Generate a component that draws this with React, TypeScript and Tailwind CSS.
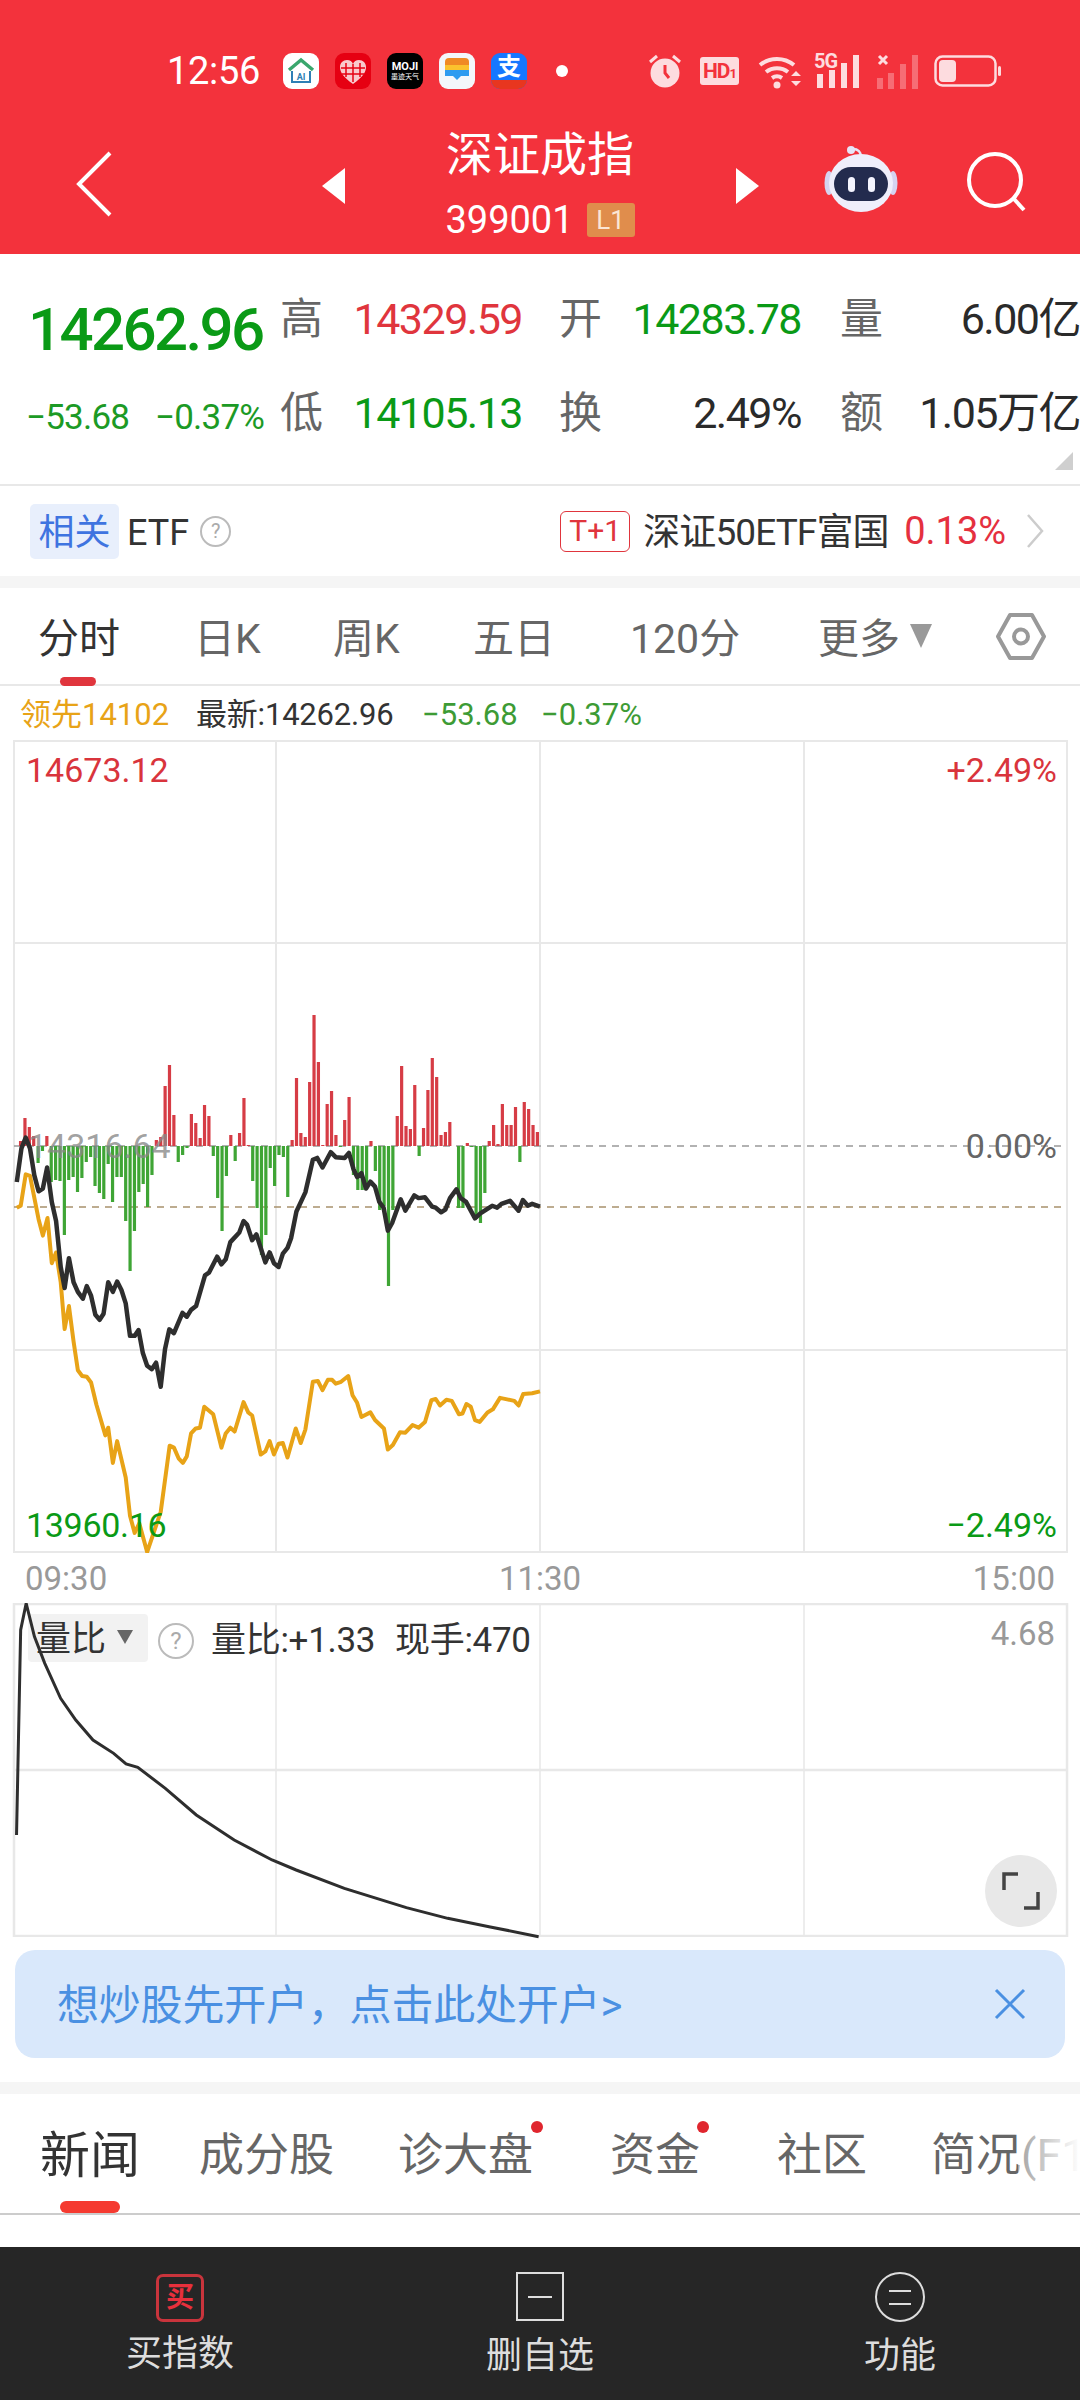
const bars = [0, 5, 28, 19, 10, -17, -5, 10, -36, -34, -35, -89, -34, -31, -46, -32, -16, -11, -40, -47, -53, -18, -56, -31, -31, -75, -125, -85, -46, -38, -61, -29, 6, 9, 60, 81, 31, -16, -9, -2, 32, 23, 8, 41, 30, -10, -52, -85, -30, 11, -15, 13, 48, 1, -35, -62, -109, -89, -22, -40, -9, -11, -51, 6, 68, 13, 9, 64, 131, 84, 1, 42, 55, 11, -1, 26, 49, -29, -44, -44, -40, 5, -25, -64, -60, -140, -64, 30, 80, 20, 17, 61, -10, 18, 56, 88, 69, 11, 14, 24, 0, -62, -62, 3, -1, -73, -77, -47, 5, 21, 2, 42, 21, 21, 39, -16, 44, 37, 21, 14];

const blackLine = '47,528 60,440 72,412 84,440 96,510 108,552 120,545 132,490 145,580 157,630 170,750 181,805 193,727 206,790 218,815 232,833 243,800 255,825 267,875 279,888 290,872 303,790 316,815 328,788 340,810 352,845 364,930 377,930 388,915 400,975 412,1008 425,1017 437,1000 450,1063 462,965 474,913 487,923 511,870 523,880 535,862 549,852 574,772 585,765 608,723 620,743 632,730 645,685 670,660 682,630 692,640 706,680 718,665 743,738 755,712 767,740 780,750 792,715 805,700 815,675 830,605 855,555 876,470 888,465 903,490 926,450 940,463 965,465 977,452 990,495 1000,515 1012,505 1025,545 1037,527 1050,540 1062,580 1074,595 1086,655 1098,635 1122,573 1135,603 1160,563 1172,570 1190,568 1210,592 1220,595 1235,607 1247,600 1260,570 1278,547 1290,570 1305,580 1330,623 1345,610 1378,590 1392,595 1404,585 1428,577 1452,603 1464,575 1478,590 1490,585 1512,592';

const orangeLine = '47,595 58,590 72,508 84,512 108,625 120,668 133,622 145,740 157,712 170,790 181,912 193,852 206,945 218,1020 230,1035 243,1037 255,1052 270,1110 295,1190 303,1170 316,1262 328,1205 352,1300 364,1400 377,1445 390,1420 412,1495 450,1390 475,1217 487,1222 500,1250 512,1262 523,1245 535,1185 548,1172 560,1170 572,1115 597,1135 620,1222 632,1185 645,1170 657,1180 682,1103 695,1130 706,1138 730,1240 743,1232 755,1205 767,1240 780,1212 792,1210 805,1248 828,1172 842,1210 855,1175 876,1050 890,1048 903,1072 918,1045 930,1045 940,1055 955,1050 975,1035 987,1085 1000,1105 1012,1142 1037,1130 1050,1150 1075,1172 1086,1227 1100,1215 1120,1182 1135,1183 1155,1163 1172,1170 1190,1155 1208,1098 1220,1095 1232,1112 1250,1097 1265,1100 1285,1135 1295,1133 1306,1108 1318,1115 1330,1150 1343,1155 1365,1130 1380,1122 1400,1092 1420,1096 1440,1100 1452,1112 1465,1082 1490,1080 1512,1075';

const ratioLine = '24,885 30,270 38,190 50,290 65,370 88,475 110,540 135,600 165,640 183,672 200,682 240,745 285,825 340,900 395,960 430,990 500,1045 590,1103 650,1135 710,1160 782,1190';

function StatusIcons() {
  return (
    <div className="flex h-full items-center">
      {/* alarm */}
      <svg width="34" height="34" viewBox="0 0 34 34" className="ml-[80px] shrink-0">
        <circle cx="17" cy="19" r="14.5" fill="#fddcdf" />
        <path d="M17 11v8l4 5" stroke="#f3323c" strokeWidth="3" fill="none" />
        <path d="M2 8l7-6M32 8l-7-6" stroke="#fddcdf" strokeWidth="3" />
      </svg>
      <div className="ml-[18px] flex h-[28px] w-[39px] shrink-0 items-center justify-center rounded-[3px] bg-[#fddcdf] text-[21px] font-bold leading-none tracking-[-1px] text-[#f3323c]">
        HD<span className="mt-[5px] text-[13px]">1</span>
      </div>
      {/* wifi */}
      <svg width="46" height="36" viewBox="0 0 46 36" className="ml-[18px] shrink-0">
        <path d="M3 12a27 27 0 0 1 34 0M9 19a18 18 0 0 1 22 0M15 25a9 9 0 0 1 10 0" stroke="#fddcdf" strokeWidth="4" fill="none" />
        <circle cx="20" cy="32" r="3.5" fill="#fddcdf" />
        <path d="M34 23l5-5 5 5zM34 28l5 5 5-5z" fill="#fddcdf" />
      </svg>
      <div className="relative ml-[11px] h-[34px] w-[47px] shrink-0">
        <span className="absolute left-0 top-[-3px] text-[20px] font-bold leading-none tracking-[-1px] text-[#fddcdf]">5G</span>
        <svg width="47" height="34" viewBox="0 0 47 34" className="absolute inset-0">
          <path d="M3 20h6v14H3zM15 16h6v18h-6zM27 9h6v25h-6zM39 1h6v33h-6z" fill="#fddcdf" />
        </svg>
      </div>
      <svg width="43" height="36" viewBox="0 0 43 36" className="ml-[15px] shrink-0">
        <path d="M1 25h6v11H1zM12 20h6v16h-6zM24 11h6v25h-6zM36 2h6v34h-6z" fill="#fddcdf" fillOpacity="0.35" />
        <path d="M3 3l8 8M11 3l-8 8" stroke="#fddcdf" strokeWidth="3" />
      </svg>
      <svg width="68" height="32" viewBox="0 0 68 32" className="ml-[15px] shrink-0">
        <rect x="1.5" y="1.5" width="60" height="29" rx="7" stroke="#fddcdf" strokeWidth="2.5" fill="none" />
        <rect x="5" y="5" width="17" height="22" rx="4" fill="#fddcdf" />
        <rect x="64" y="11" width="3" height="10" rx="1.5" fill="#fddcdf" />
      </svg>
    </div>
  );
}

function AppIcons() {
  return (
    <div className="ml-[23px] flex shrink-0 items-center gap-[16px]">
      <div className="h-[36px] w-[36px] overflow-hidden rounded-[9px] bg-white">
        <svg width="36" height="36" viewBox="0 0 36 36">
          <path d="M6 17L18 7l12 10" stroke="#3aa76d" strokeWidth="3.5" fill="none" />
          <path d="M9 18v11h18V18" stroke="#2f7fb5" strokeWidth="2" fill="none" />
          <text x="18" y="27" textAnchor="middle" fontSize="9" fontWeight="700" fill="#2f7fb5">AI</text>
        </svg>
      </div>
      <div className="h-[36px] w-[36px] overflow-hidden rounded-[9px] bg-[#e60012]">
        <svg width="36" height="36" viewBox="0 0 36 36">
          <path d="M18 31C8 24 5 19 5 14c0-4 3-7 7-7 3 0 5 1.500 6 4 1-2.500 3-4 6-4 4 0 7 3 7 7 0 5-3 10-13 17z" fill="#f9c9cc" />
          <path d="M11 10v14M18 11v18M25 10v14M6 15h24M7 21h22" stroke="#e60012" strokeWidth="1.500" />
        </svg>
      </div>
      <div className="flex h-[36px] w-[36px] flex-col items-center justify-center rounded-[9px] bg-black text-white">
        <span className="text-[11px] font-bold leading-none">MOJI</span>
        <span className="mt-[2px] text-[7px] leading-none">墨迹天气</span>
      </div>
      <div className="h-[36px] w-[36px] overflow-hidden rounded-[9px] bg-[#f3f7fb]">
        <svg width="36" height="36" viewBox="0 0 36 36">
          <path d="M6 9a4 4 0 0 1 4-4h16a4 4 0 0 1 4 4v3H6z" fill="#f08a24" />
          <rect x="6" y="12" width="24" height="5" fill="#fbc22d" />
          <path d="M6 17h24v6H22l-4 4-4-4H6z" fill="#2d9bf0" />
        </svg>
      </div>
      <div className="relative h-[36px] w-[36px] overflow-hidden rounded-[9px] bg-[#1677ff]">
        <span className="absolute left-0 right-0 top-[2px] text-center text-[24px] font-bold leading-none text-white">支</span>
        <div className="absolute bottom-0 left-0 right-0 h-[9px] bg-[#e8361f]" />
      </div>
      <div className="ml-[13px] h-[12px] w-[12px] rounded-full bg-white" />
    </div>
  );
}

function Header() {
  return (
    <header className="h-[254px] bg-[#f3323c] text-white">
      <div className="flex h-[142px] items-center pl-[167px]">
        <span className="w-[93px] shrink-0 text-[38px] leading-none tracking-[-0.3px]">12:56</span>
        <AppIcons />
        <StatusIcons />
      </div>
      <div className="relative flex h-[112px] items-start">
        <svg width="38" height="66" viewBox="0 0 38 66" className="ml-[75px] mt-[9px] shrink-0">
          <path d="M35 2L4 33l31 31" stroke="#fff" strokeWidth="4" fill="none" />
        </svg>
        <svg width="24" height="36" viewBox="0 0 24 36" className="ml-[209px] mt-[26px] shrink-0">
          <path d="M23 0v36L0 18z" fill="#fff" />
        </svg>
        <div className="ml-[98px] flex w-[192px] shrink-0 flex-col items-center">
          <span className="mt-[-14px] text-[47px] leading-[54px]">深证成指</span>
          <div className="mt-[19px] flex items-center gap-[13px]">
            <span className="text-[38px] leading-[38px]">399001</span>
            <span className="flex h-[34px] w-[48px] items-center justify-center rounded-[3px] bg-[#e08d4c] text-[26px] leading-none text-[#fbe6d5]">L1</span>
          </div>
        </div>
        <svg width="24" height="36" viewBox="0 0 24 36" className="ml-[99px] mt-[26px] shrink-0">
          <path d="M1 0v36l23-18z" fill="#fff" />
        </svg>
        {/* robot */}
        <svg width="74" height="70" viewBox="0 0 74 70" className="ml-[65px] mt-[2px] shrink-0">
          <circle cx="27" cy="6" r="4" fill="#e6e4f7" />
          <path d="M29 5c5 0 8 3 8 8" stroke="#e6e4f7" strokeWidth="2.500" fill="none" />
          <ellipse cx="5" cy="39" rx="4.500" ry="12" fill="#d5d3f0" />
          <ellipse cx="69" cy="39" rx="4.500" ry="12" fill="#d5d3f0" />
          <ellipse cx="37" cy="39" rx="32" ry="29" fill="#efeefb" />
          <rect x="10" y="23" width="54" height="34" rx="17" fill="#232b4e" />
          <rect x="24" y="33" width="7" height="15" rx="3.500" fill="#f4f4ff" />
          <rect x="44" y="33" width="7" height="15" rx="3.500" fill="#f4f4ff" />
        </svg>
        {/* search */}
        <svg width="62" height="62" viewBox="0 0 62 62" className="ml-[67px] mt-[10px] shrink-0">
          <circle cx="30" cy="28" r="26" stroke="#fff" strokeWidth="4" fill="none" />
          <path d="M49 47l10 11" stroke="#fff" strokeWidth="4" fill="none" />
        </svg>
      </div>
    </header>
  );
}

function QuoteCell({ label, value, color, width }: { label: string; value: string; color: string; width: string }) {
  return (
    <div className="flex items-center">
      <span className="ml-[-1px] mr-[1px] w-[41px] whitespace-nowrap text-[43px] leading-none text-[#666]">{label}</span>
      <span className={`${width} text-right text-[43px] leading-none tracking-[-1.5px] ${color}`}>{value}</span>
    </div>
  );
}

function Quote() {
  return (
    <section className="relative flex h-[232px] border-b-2 border-[#e8e8e8] bg-white">
      <div className="w-[281px] shrink-0 pl-[28px]">
        <div className="mt-[45px] text-[60px] font-medium leading-[62px] tracking-[-2.6px] text-[#0a9a16]">14262.96</div>
        <div className="mt-[39px] flex items-center text-[35px] leading-none tracking-[-0.8px] text-[#1c9a25]">
          <span className="ml-[-2px] w-[129px]">−53.68</span>
          <span>−0.37%</span>
        </div>
      </div>
      <div className="flex flex-col gap-[51px] pt-[44px]">
        <div className="flex">
          <QuoteCell label="高" value="14329.59" color="text-[#e0353d]" width="w-[200px]" />
          <div className="ml-[38px]">
            <QuoteCell label="开" value="14283.78" color="text-[#0a9a16]" width="w-[200px]" />
          </div>
          <div className="ml-[40px]">
            <QuoteCell label="量" value="6.00亿" color="text-[#2a2a2a]" width="w-[198px]" />
          </div>
        </div>
        <div className="flex">
          <QuoteCell label="低" value="14105.13" color="text-[#0a9a16]" width="w-[200px]" />
          <div className="ml-[38px]">
            <QuoteCell label="换" value="2.49%" color="text-[#2a2a2a]" width="w-[200px]" />
          </div>
          <div className="ml-[40px]">
            <QuoteCell label="额" value="1.05万亿" color="text-[#2a2a2a]" width="w-[198px]" />
          </div>
        </div>
      </div>
      <svg width="18" height="18" viewBox="0 0 18 18" className="absolute bottom-[14px] right-[7px]">
        <path d="M18 0v18H0z" fill="#cfcfcf" />
      </svg>
    </section>
  );
}

function EtfRow() {
  return (
    <section className="flex h-[90px] items-center bg-white pl-[30px]">
      <span className="flex h-[55px] w-[89px] shrink-0 items-center justify-center rounded-[5px] bg-[#e8effc] pt-[3px] text-[36px] leading-none text-[#3f74e0]">相关</span>
      <span className="ml-[8px] mt-[3px] text-[36px] leading-none text-[#333]">ETF</span>
      <span className="ml-[11px] flex h-[31px] w-[31px] shrink-0 items-center justify-center rounded-full border-2 border-[#bbb] text-[20px] leading-none text-[#aaa]">?</span>
      <span className="ml-[329px] flex h-[41px] w-[70px] shrink-0 items-center justify-center rounded-[6px] border border-[#e0353d] text-[30px] leading-none text-[#e0353d]">T+1</span>
      <span className="ml-[13px] mt-[3px] w-[242px] shrink-0 whitespace-nowrap text-[37px] leading-none tracking-[-0.9px] text-[#333]">深证50ETF富国</span>
      <span className="ml-[19px] mt-[-1px] w-[102px] shrink-0 whitespace-nowrap text-[38px] leading-none text-[#e5303f]">0.13%</span>
      <svg width="18" height="34" viewBox="0 0 18 34" className="ml-[20px] shrink-0">
        <path d="M2 1l14 16L2 33" stroke="#ccc" strokeWidth="2.500" fill="none" />
      </svg>
    </section>
  );
}

function PeriodTabs() {
  return (
    <nav className="relative flex h-[98px] items-center border-b-2 border-[#e8e8e8] bg-white pl-[38px] pt-[6px] text-[41px] leading-none text-[#666]">
      <span className="w-[159px] shrink-0 text-[#333]">分时</span>
      <span className="ml-[-3px] w-[139px] shrink-0">日K</span>
      <span className="w-[140px] shrink-0">周K</span>
      <span className="w-[157px] shrink-0">五日</span>
      <span className="w-[188px] shrink-0">120分</span>
      <span className="shrink-0">更多</span>
      <svg width="22" height="24" viewBox="0 0 22 24" className="ml-[10px] mt-[-6px] shrink-0">
        <path d="M0 0h22L11 24z" fill="#999" />
      </svg>
      <svg width="50" height="47" viewBox="0 0 50 47" className="ml-[64px] mt-[-6px] shrink-0">
        <path d="M14 2h22l12 21.500L36 45H14L2 23.500z" stroke="#999" strokeWidth="4" fill="none" strokeLinejoin="round" />
        <circle cx="25" cy="23.500" r="7" stroke="#999" strokeWidth="4" fill="none" />
      </svg>
      <div className="absolute bottom-[-2px] left-[60px] h-[9px] w-[36px] rounded-full bg-[#e0353d]" />
    </nav>
  );
}

function InfoLine() {
  return (
    <div className="flex h-[54px] items-center pl-[20px] pt-[2px] text-[31px] leading-none">
      <span className="w-[176px] shrink-0 text-[#e8a317]">领先14102</span>
      <span className="w-[226px] shrink-0 tracking-[-0.2px] text-[#333]">最新:14262.96</span>
      <span className="w-[119px] shrink-0 text-[#3d9b35]">−53.68</span>
      <span className="shrink-0 text-[#3d9b35]">−0.37%</span>
    </div>
  );
}

function PriceChart() {
  const h = 813;
  return (
    <div className="relative h-[813px] bg-white">
      <svg width="1080" height={h} viewBox={`0 740 1080 ${h}`} className="absolute inset-0">
        <g stroke="#e8e8e8" strokeWidth="2" fill="none">
          <rect x="14" y="741" width="1053" height="811" />
          <path d="M276 740v813M540 740v813M804 740v813M14 943h1053M14 1350h1053" />
        </g>
        <path d="M14 1146h1053" stroke="#999" strokeWidth="1.500" strokeDasharray="7 6" />
        <path d="M14 1207h1053" stroke="#a8916c" strokeWidth="1.500" strokeDasharray="7 6" />
        {bars.map((v, i) => (
          <rect
            key={i}
            x={14 + 4.38 * (i + 0.5) - 1.6}
            y={v > 0 ? 1146 - v : 1146}
            width="3.200"
            height={Math.abs(v)}
            fill={v > 0 ? '#d63c45' : '#3fa535'}
          />
        ))}
        <g transform="translate(0 980) scale(0.35714 0.38265)" fill="none" strokeLinejoin="round">
          <polyline points={orangeLine} stroke="#e8a317" strokeWidth="4" vectorEffect="non-scaling-stroke" />
          <polyline points={blackLine} stroke="#2e2e2e" strokeWidth="4.500" vectorEffect="non-scaling-stroke" />
        </g>
      </svg>
      <span className="absolute left-[26px] top-[13px] text-[34px] leading-[34px] text-[#d9343c]">14673.12</span>
      <span className="absolute right-[23px] top-[13px] text-[34px] leading-[34px] text-[#d9343c]">+2.49%</span>
      <span className="absolute left-[28px] top-[389px] text-[34px] leading-[34px] text-[#888]/80">14316.64</span>
      <span className="absolute right-[23px] top-[389px] text-[34px] leading-[34px] text-[#666]">0.00%</span>
      <span className="absolute left-[26px] top-[768px] text-[34px] leading-[34px] tracking-[-0.3px] text-[#0a9a16]">13960.16</span>
      <span className="absolute right-[23px] top-[768px] text-[34px] leading-[34px] text-[#0a9a16]">−2.49%</span>
    </div>
  );
}

function TimeAxis() {
  return (
    <div className="flex h-[50px] items-center justify-between px-[25px] text-[33px] leading-none text-[#999]">
      <span>09:30</span>
      <span>11:30</span>
      <span>15:00</span>
    </div>
  );
}

function RatioChart() {
  return (
    <div className="relative h-[334px] bg-white">
      <svg width="1080" height="334" viewBox="0 1603 1080 334" className="absolute inset-0">
        <g stroke="#e8e8e8" strokeWidth="1.500" fill="none">
          <path d="M276 1603v334M540 1603v334M804 1603v334" />
        </g>
        <g stroke="#e8e8e8" strokeWidth="2.500" fill="none">
          <rect x="14" y="1604" width="1053" height="332" />
          <path d="M14 1770h1053" />
        </g>
      </svg>
      <div className="absolute left-[28px] top-[11px] flex h-[48px] w-[120px] items-center rounded-[4px] bg-[#f2f2f2] pl-[8px] pt-[2px]">
        <span className="text-[35px] leading-none text-[#333]">量比</span>
        <svg width="16" height="14" viewBox="0 0 16 14" className="ml-[11px] mt-[-4px]">
          <path d="M0 0h16L8 14z" fill="#666" />
        </svg>
      </div>
      <svg width="1080" height="460" viewBox="0 0 1568 1380" preserveAspectRatio="none" className="absolute left-0 top-[-63px]">
        <polyline points={ratioLine} stroke="#2e2e2e" strokeWidth="3" fill="none" vectorEffect="non-scaling-stroke" />
      </svg>
      <span className="absolute left-[158px] top-[20px] flex h-[36px] w-[36px] items-center justify-center rounded-full border-2 border-[#bbb] text-[24px] leading-none text-[#aaa]">?</span>
      <span className="absolute left-[211px] top-[20px] text-[35px] leading-none tracking-[-0.3px] text-[#333]">量比:+1.33</span>
      <span className="absolute left-[395px] top-[20px] text-[35px] leading-none tracking-[-0.3px] text-[#333]">现手:470</span>
      <span className="absolute right-[25px] top-[14px] text-[33px] leading-none text-[#999]">4.68</span>
      <div className="absolute left-[985px] top-[252px] flex h-[72px] w-[72px] items-center justify-center rounded-full bg-[#e8e8e8]">
        <svg width="38" height="38" viewBox="0 0 38 38">
          <path d="M16 2H2v16M22 36h14V20" stroke="#444" strokeWidth="3.500" fill="none" />
        </svg>
      </div>
    </div>
  );
}

function Banner() {
  return (
    <div className="mx-[15px] mt-[13px] flex h-[108px] items-center rounded-[20px] bg-[#d9e8fb] pl-[42px] pr-[39px]">
      <span className="mt-[3px] text-[42px] leading-none tracking-[-0.2px] text-[#4a90e2]">想炒股先开户，点击此处开户&gt;</span>
      <svg width="32" height="32" viewBox="0 0 32 32" className="ml-auto shrink-0">
        <path d="M2 2l28 28M30 2L2 30" stroke="#4a90e2" strokeWidth="3" fill="none" />
      </svg>
    </div>
  );
}

function NewsTabs() {
  return (
    <nav className="relative h-[121px] overflow-hidden border-b-2 border-[#ccc] bg-white">
      <div className="flex h-[120px] items-center whitespace-nowrap pl-[40px] pt-[3px] text-[45px] leading-none text-[#666]">
        <span className="w-[159px] shrink-0 text-[50px] text-[#333]">新闻</span>
        <span className="w-[199px] shrink-0">成分股</span>
        <span className="relative w-[212px] shrink-0">
          诊大盘
          <span className="absolute left-[133px] top-[-12px] h-[12px] w-[12px] rounded-full bg-[#e0262e]" />
        </span>
        <span className="relative w-[167px] shrink-0">
          资金
          <span className="absolute left-[87px] top-[-12px] h-[12px] w-[12px] rounded-full bg-[#e0262e]" />
        </span>
        <span className="w-[154px] shrink-0">社区</span>
        <span className="shrink-0">简况(F10)</span>
      </div>
      <div className="absolute bottom-0 right-0 top-0 w-[62px] bg-gradient-to-r from-white/40 to-white" />
      <div className="absolute bottom-0 left-[60px] h-[12px] w-[60px] rounded-full bg-[#f53a30]" />
    </nav>
  );
}

function BottomBar() {
  return (
    <footer className="mt-[32px] grid h-[153px] grid-cols-3 bg-[#262626] text-[36px] leading-none text-[#ddd]">
      <div className="flex flex-col items-center pt-[27px]">
        <div className="flex h-[48px] w-[48px] items-center justify-center rounded-[7px] border-[3px] border-[#c9343c] text-[28px] font-bold leading-none text-[#e8303c]">买</div>
        <span className="mt-[14px]">买指数</span>
      </div>
      <div className="flex flex-col items-center pt-[25px]">
        <div className="flex h-[49px] w-[48px] items-center justify-center border-2 border-[#ddd]">
          <div className="h-[2px] w-[24px] bg-[#ddd]" />
        </div>
        <span className="mt-[17px]">删自选</span>
      </div>
      <div className="flex flex-col items-center pt-[25px]">
        <div className="flex h-[50px] w-[50px] flex-col items-center justify-center gap-[11px] rounded-full border-2 border-[#ddd]">
          <div className="h-[2px] w-[22px] bg-[#ddd]" />
          <div className="h-[2px] w-[22px] bg-[#ddd]" />
        </div>
        <span className="mt-[16px]">功能</span>
      </div>
    </footer>
  );
}

export default function App() {
  return (
    <div className="h-[2400px] w-[1080px] overflow-hidden bg-white font-['Roboto','Noto_Sans_CJK_SC',sans-serif]">
      <Header />
      <Quote />
      <EtfRow />
      <div className="h-[12px] bg-[#f5f5f5]" />
      <PeriodTabs />
      <InfoLine />
      <PriceChart />
      <TimeAxis />
      <RatioChart />
      <Banner />
      <div className="mt-[24px] h-[12px] bg-[#f5f5f5]" />
      <NewsTabs />
      <BottomBar />
    </div>
  );
}
